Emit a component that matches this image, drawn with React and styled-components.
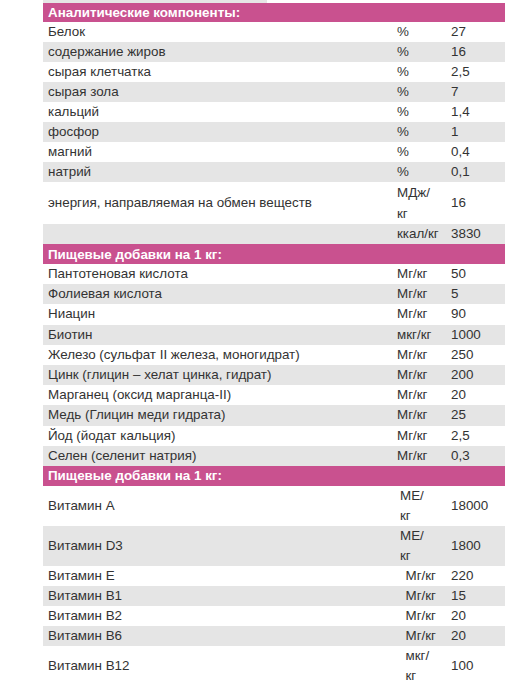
import styled, { createGlobalStyle } from "styled-components";

// global ------------------------------------------------
const GlobalStyle = createGlobalStyle`
  body {
    margin: 0;
    background: #fff;
    font-family: "Liberation Sans", Arial, sans-serif;
    font-size: 13.4px;
    color: #333;
  }
`;

// components --------------------------------------------
const Page = styled.div`
  width: 516px;
  padding-left: 43px;
  box-sizing: border-box;
`;
const TopStrip = styled.div`
  width: 224px;
  height: 3px;
  background-color: #e6e6e6;
`;
const Table = styled.div`
  width: 462px;
  display: flex;
  flex-direction: column;
`;
const Header = styled.div`
  height: ${(p) => p.$h || 20}px;
  display: flex;
  align-items: center;
  padding-left: 5px;
  background-color: #c9518f;
  color: #fff;
  font-weight: bold;
`;
const Row = styled.div`
  display: grid;
  grid-template-columns: ${(p) => p.$cols};
  height: ${(p) => p.$h}px;
  background-color: ${(p) => (p.$alt ? "#e5e5e5" : "#fff")};
`;
const Cell = styled.div`
  display: flex;
  flex-direction: column;
  justify-content: center;
  padding-left: ${(p) => (p.$pad === undefined ? 5 : p.$pad)}px;
  line-height: ${(p) => p.$lh || 20}px;
  white-space: nowrap;
`;

// data --------------------------------------------------
const sections = [
  {
    title: "Аналитические компоненты:",
    cols: "349px 54px 1fr",
    rowH: 20,
    unitPad: 5,
    rows: [
      ["Белок", "%", "27"],
      ["содержание жиров", "%", "16"],
      ["сырая клетчатка", "%", "2,5"],
      ["сырая зола", "%", "7"],
      ["кальций", "%", "1,4"],
      ["фосфор", "%", "1"],
      ["магний", "%", "0,4"],
      ["натрий", "%", "0,1"],
      ["энергия, направляемая на обмен веществ", ["МДж/", "кг"], "16"],
      ["", "ккал/кг", "3830"],
    ],
  },
  {
    title: "Пищевые добавки на 1 кг:",
    cols: "349px 54px 1fr",
    rowH: 20.2,
    unitPad: 5,
    rows: [
      ["Пантотеновая кислота", "Мг/кг", "50"],
      ["Фолиевая кислота", "Мг/кг", "5"],
      ["Ниацин", "Мг/кг", "90"],
      ["Биотин", "мкг/кг", "1000"],
      ["Железо (сульфат II железа, моногидрат)", "Мг/кг", "250"],
      ["Цинк (глицин – хелат цинка, гидрат)", "Мг/кг", "200"],
      ["Марганец (оксид марганца-II)", "Мг/кг", "20"],
      ["Медь (Глицин меди гидрата)", "Мг/кг", "25"],
      ["Йод (йодат кальция)", "Мг/кг", "2,5"],
      ["Селен (селенит натрия)", "Мг/кг", "0,3"],
    ],
  },
  {
    title: "Пищевые добавки на 1 кг:",
    cols: "357px 46px 1fr",
    rowH: 20,
    unitPad: 5.5,
    rows: [
      ["Витамин A", ["МЕ/", "кг"], "18000"],
      ["Витамин D3", ["МЕ/", "кг"], "1800"],
      ["Витамин E", "Мг/кг", "220"],
      ["Витамин B1", "Мг/кг", "15"],
      ["Витамин B2", "Мг/кг", "20"],
      ["Витамин B6", "Мг/кг", "20"],
      ["Витамин B12", ["мкг/", "кг"], "100"],
    ],
  },
];

// function ----------------------------------------------
function App() {
  return (
    <Page>
      <GlobalStyle />
      <TopStrip />
      <Table>
        {sections.map((s, si) => (
          <div key={si}>
            <Header $h={si === 0 ? 19 : 20}>{s.title}</Header>
            {s.rows.map(([name, unit, value], ri) => {
              const tall = Array.isArray(unit);
              const h = tall ? (si === 0 ? 42 : 40) : s.rowH;
              return (
                <Row key={ri} $cols={s.cols} $h={h} $alt={ri % 2 === 1}>
                  <Cell>{name}</Cell>
                  <Cell
                    $pad={tall && si === 2 && unit[0] === "МЕ/" ? 0 : s.unitPad}
                    $lh={tall ? h / 2 : 20}
                  >
                    {tall ? unit.map((u) => <span key={u}>{u}</span>) : unit}
                  </Cell>
                  <Cell>{value}</Cell>
                </Row>
              );
            })}
          </div>
        ))}
      </Table>
    </Page>
  );
}

export default App;
